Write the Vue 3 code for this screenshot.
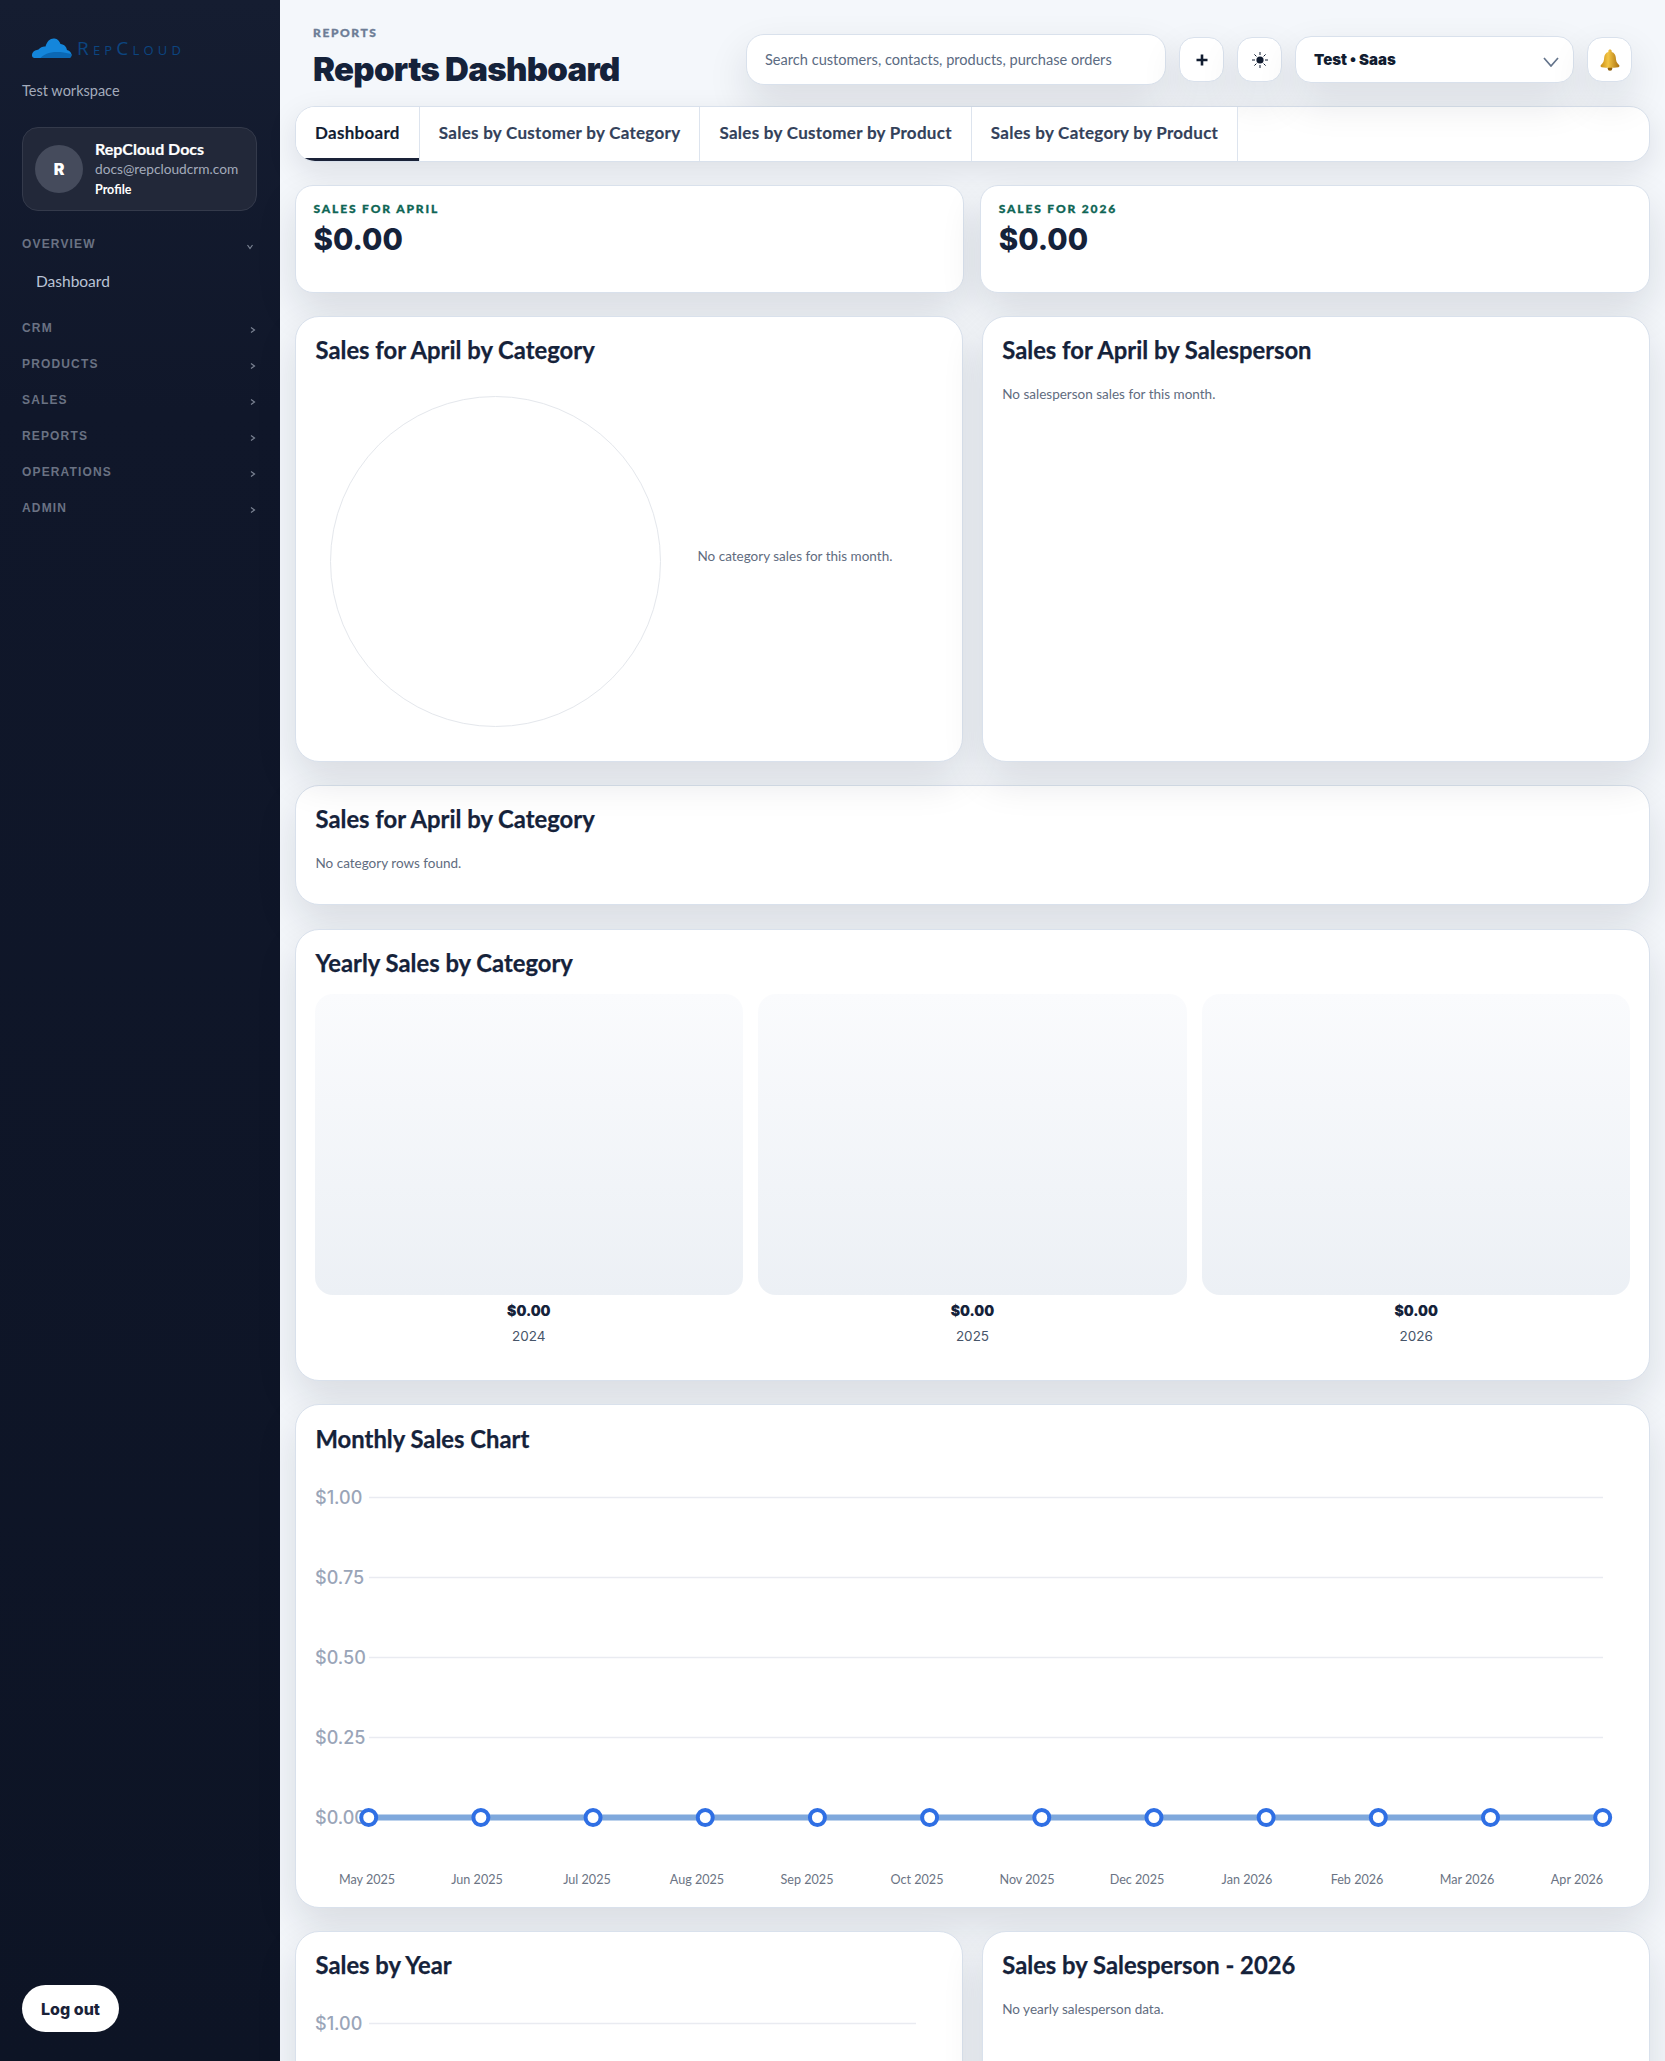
<template>
  <div class="shell">
    <aside class="sidebar">
      <div class="brand">
        <svg class="cloud" viewBox="0 0 40 20" aria-hidden="true">
          <path fill="#1486db" d="M3 20C.5 20 0 17 1 15c1-2.500 4-3 6-3.500C9 9 12 8 14 8.500 15.500 3 19 0 23 .5c3 0 5 2.500 6 5.500 4 .5 6 3 6.500 6 3 .5 4.500 3 4.500 5 0 2-1 3-3 3z"/>
          <path fill="#0b68b4" d="M9 20c4-5 14-8.500 31-4 .3 2-.8 4-3 4z"/>
        </svg>
        <span class="wordmark">RepCloud</span>
      </div>
      <p class="workspace">Test workspace</p>

      <div class="profile-card">
        <div class="avatar">R</div>
        <div class="profile-text">
          <div class="profile-name">RepCloud Docs</div>
          <div class="profile-mail">docs@repcloudcrm.com</div>
          <div class="profile-link">Profile</div>
        </div>
      </div>

      <nav class="nav">
        <div v-for="group in navGroups" :key="group.label" class="nav-group">
          <div class="nav-head">
            <span>{{ group.label }}</span>
            <svg class="nav-caret" :class="{ open: group.items }" viewBox="0 0 8 8" aria-hidden="true">
              <path d="M2 1.500 5.500 4 2 6.500" fill="none" stroke="currentColor" stroke-width="1.200"/>
            </svg>
          </div>
          <a v-for="item in group.items" :key="item" class="nav-item">{{ item }}</a>
        </div>
      </nav>

      <button type="button" class="logout">Log out</button>
    </aside>

    <main class="main">
      <header class="header">
        <div class="heading">
          <div class="eyebrow">REPORTS</div>
          <h1 class="page-title">Reports Dashboard</h1>
        </div>
        <div class="toolbar">
          <div class="search">Search customers, contacts, products, purchase orders</div>
          <button type="button" class="icon-btn" aria-label="Add">
            <svg viewBox="0 0 14 14" width="14" height="14"><path d="M7 1.500v11M1.500 7h11" stroke="#111c30" stroke-width="2.600"/></svg>
          </button>
          <button type="button" class="icon-btn" aria-label="Theme">
            <svg viewBox="0 0 18 18" width="18" height="18">
              <circle cx="9" cy="9" r="3.600" fill="#111c30"/>
              <path d="M9 1v3M9 14v3M1 9h3M14 9h3M3.400 3.400l2 2M12.600 12.600l2 2M3.400 14.600l2-2M12.600 5.400l2-2" stroke="#111c30" stroke-width="1"/>
            </svg>
          </button>
          <div class="company">
            <span>Test • Saas</span>
            <svg class="company-caret" viewBox="0 0 16 10" width="16" height="10"><path d="M1 1l7 8 7-8" fill="none" stroke="#64748b" stroke-width="1.700"/></svg>
          </div>
          <button type="button" class="icon-btn" aria-label="Notifications">
            <svg viewBox="0 0 22 22" width="22" height="22">
              <defs>
                <linearGradient id="bell" x1="0" y1="0" x2="1" y2="0">
                  <stop offset="0" stop-color="#c98d17"/>
                  <stop offset=".4" stop-color="#f3c544"/>
                  <stop offset="1" stop-color="#a96f0e"/>
                </linearGradient>
              </defs>
              <circle cx="11" cy="19.500" r="2.300" fill="#8f5f0c"/>
              <path fill="url(#bell)" d="M11 .5c1 0 1.700.7 1.700 1.700v.7c2.800.8 3.900 3 4.100 5.700.2 3.300.8 5.300 3.200 7.400.7.700.6 2-.6 2.200-5.300.7-11.500.7-16.800 0-1.200-.2-1.300-1.500-.6-2.200 2.400-2.100 3-4.100 3.200-7.400.2-2.700 1.300-4.900 4.100-5.700v-.7C9.300 1.200 10 .5 11 .5z"/>
            </svg>
          </button>
        </div>
      </header>

      <div class="tabs">
        <button
          v-for="tab in tabs"
          :key="tab"
          type="button"
          class="tab"
          :class="{ active: tab === 'Dashboard' }"
        >
          {{ tab }}
        </button>
      </div>

      <section class="metrics">
        <div v-for="metric in metrics" :key="metric" class="metric">
          <div class="metric-label">{{ metric }}</div>
          <div class="metric-value">$0.00</div>
        </div>
      </section>

      <section class="two-col">
        <div class="panel panel-tall">
          <h2 class="panel-title">Sales for April by Category</h2>
          <div class="pie-row">
            <div class="pie"></div>
            <p class="muted pie-note">No category sales for this month.</p>
          </div>
        </div>
        <div class="panel panel-tall">
          <h2 class="panel-title">Sales for April by Salesperson</h2>
          <p class="muted note">No salesperson sales for this month.</p>
        </div>
      </section>

      <section class="panel panel-rows">
        <h2 class="panel-title">Sales for April by Category</h2>
        <p class="muted note">No category rows found.</p>
      </section>

      <section class="panel panel-yearly">
        <h2 class="panel-title">Yearly Sales by Category</h2>
        <div class="year-grid">
          <div v-for="year in years" :key="year" class="year-col">
            <div class="year-tile"></div>
            <div class="year-value">$0.00</div>
            <div class="year-label">{{ year }}</div>
          </div>
        </div>
      </section>

      <section class="panel panel-monthly">
        <h2 class="panel-title">Monthly Sales Chart</h2>
        <svg class="chart" width="1315" height="418" viewBox="0 0 1315 418">
          <g v-for="tick in ticks" :key="tick.label">
            <line x1="54" x2="1288" :y1="tick.y" :y2="tick.y" class="grid-line" />
            <text x="0" :y="tick.y + 6.500" class="y-tick">{{ tick.label }}</text>
          </g>
          <line x1="53.700" x2="1287.700" y1="347.500" y2="347.500" class="series" />
          <circle v-for="p in points" :key="p.label" :cx="p.x" cy="347.500" r="7.500" class="dot" />
          <text
            v-for="p in points"
            :key="'label-' + p.label"
            :x="p.labelX"
            y="414"
            text-anchor="middle"
            class="x-tick"
          >
            {{ p.label }}
          </text>
        </svg>
      </section>

      <section class="two-col">
        <div class="panel panel-last">
          <h2 class="panel-title">Sales by Year</h2>
          <svg class="chart" width="628" height="60" viewBox="0 0 628 60">
            <line x1="54" x2="601" y1="27.500" y2="27.500" class="grid-line" />
            <text x="0" y="34" class="y-tick">$1.00</text>
          </svg>
        </div>
        <div class="panel panel-last">
          <h2 class="panel-title">Sales by Salesperson - 2026</h2>
          <p class="muted note">No yearly salesperson data.</p>
        </div>
      </section>
    </main>
  </div>
</template>

<script setup>
const navGroups = [
  { label: 'OVERVIEW', items: ['Dashboard'] },
  { label: 'CRM' },
  { label: 'PRODUCTS' },
  { label: 'SALES' },
  { label: 'REPORTS' },
  { label: 'OPERATIONS' },
  { label: 'ADMIN' }
]

const tabs = [
  'Dashboard',
  'Sales by Customer by Category',
  'Sales by Customer by Product',
  'Sales by Category by Product'
]

const metrics = ['SALES FOR APRIL', 'SALES FOR 2026']
const years = [2024, 2025, 2026]

const ticks = ['$1.00', '$0.75', '$0.50', '$0.25', '$0.00'].map((label, i) => ({
  label,
  y: 27.5 + i * 80
}))

const months = [
  'May 2025', 'Jun 2025', 'Jul 2025', 'Aug 2025', 'Sep 2025', 'Oct 2025',
  'Nov 2025', 'Dec 2025', 'Jan 2026', 'Feb 2026', 'Mar 2026', 'Apr 2026'
]

const points = months.map((label, i) => ({
  label,
  x: 53.7 + i * 112.18,
  labelX: 52 + i * 110
}))
</script>

<style>
html,
body {
  margin: 0;
  background: #f4f7fb;
}
</style>

<style scoped>
.shell {
  display: flex;
  width: 1665px;
  height: 2061px;
  overflow: hidden;
  font-family: Lato, "Open Sans", sans-serif;
  color: #15213a;
}

.sidebar {
  flex: none;
  display: flex;
  flex-direction: column;
  box-sizing: border-box;
  width: 280px;
  height: 100%;
  padding: 36px 23px 29px 22px;
  background: linear-gradient(180deg, #151d31 0%, #10172a 20%, #0d1425 100%);
}

.brand {
  display: flex;
  align-items: center;
  gap: 5px;
  height: 24px;
  padding-left: 9px;
}

.cloud {
  width: 41px;
  height: 20px;
}

.wordmark {
  font-family: "Open Sans", sans-serif;
  font-size: 19px;
  font-variant: small-caps;
  letter-spacing: 4.200px;
  color: #0c4580;
}

.workspace {
  margin: 21px 0 0;
  font-size: 14.500px;
  line-height: 20px;
  color: #a3abbb;
}

.profile-card {
  display: flex;
  align-items: center;
  gap: 12px;
  box-sizing: border-box;
  height: 84px;
  margin-top: 26px;
  padding: 0 12px;
  background: #222839;
  border: 1px solid #343a4b;
  border-radius: 16px;
}

.avatar {
  flex: none;
  display: flex;
  align-items: center;
  justify-content: center;
  width: 48px;
  height: 48px;
  border-radius: 50%;
  background: #454b5c;
  font-family: Inter, sans-serif;
  font-size: 16px;
  font-weight: 900;
  color: #fff;
}

.profile-name {
  font-size: 16px;
  font-weight: 700;
  line-height: 20px;
  color: #fff;
  -webkit-text-stroke: 0.200px #fff;
}

.profile-mail {
  font-size: 13.700px;
  line-height: 20px;
  color: #a3abbb;
}

.profile-link {
  margin-top: 1px;
  font-size: 12.500px;
  font-weight: 700;
  line-height: 20px;
  color: #fff;
}

.nav {
  margin-top: 15px;
}

.nav-head {
  display: flex;
  align-items: center;
  justify-content: space-between;
  height: 36px;
  font-family: "Liberation Sans", sans-serif;
  font-size: 12px;
  font-weight: 700;
  letter-spacing: 1.150px;
  color: #6a7283;
}

.nav-caret {
  width: 8px;
  height: 8px;
  margin-top: 3px;
  color: #7b8393;
}

.nav-caret.open {
  transform: rotate(90deg);
  margin-right: 3px;
  margin-top: 5px;
}

.nav-item {
  display: block;
  height: 38px;
  margin-bottom: 10px;
  padding-left: 14px;
  font-size: 15.500px;
  line-height: 38px;
  color: #bac4d6;
}

.logout {
  width: 97px;
  height: 47px;
  margin-top: auto;
  padding: 0;
  border: 0;
  border-radius: 24px;
  background: #fff;
  font-family: Inter, sans-serif;
  font-size: 16px;
  font-weight: 800;
  color: #1a2238;
}

.main {
  flex: 1;
  min-width: 0;
  padding: 0 15.500px 0 15px;
}

.header {
  display: flex;
  justify-content: space-between;
  box-sizing: border-box;
  height: 106px;
  padding: 26px 17.500px 0 18px;
}

.eyebrow {
  font-size: 12px;
  font-weight: 900;
  line-height: 14px;
  letter-spacing: 1.600px;
  color: #6d7d96;
  -webkit-text-stroke: 0.300px #6d7d96;
}

.page-title {
  margin: 9px 0 0;
  font-family: Inter, sans-serif;
  font-size: 33px;
  font-weight: 900;
  line-height: 40px;
  letter-spacing: -0.700px;
  color: #15223a;
}

.toolbar {
  display: flex;
  align-items: center;
  gap: 13px;
  height: 51px;
  margin-top: 8px;
}

.search,
.icon-btn,
.company,
.tabs,
.metric,
.panel {
  background: #fff;
  border: 1px solid #d9e1ec;
  box-shadow: 0 18px 40px rgba(15, 23, 42, 0.12);
}

.search {
  box-sizing: border-box;
  width: 420px;
  height: 51px;
  padding: 0 18px;
  border-radius: 18px;
  font-size: 14.600px;
  line-height: 49px;
  color: #5b6b82;
}

.icon-btn {
  display: flex;
  align-items: center;
  justify-content: center;
  box-sizing: border-box;
  width: 45px;
  height: 45px;
  padding: 0;
  border-radius: 15px;
}

.company {
  display: flex;
  align-items: center;
  justify-content: space-between;
  box-sizing: border-box;
  width: 279px;
  height: 47px;
  padding: 0 14px 0 18px;
  border-radius: 16px;
  font-family: Inter, sans-serif;
  font-size: 15px;
  font-weight: 900;
  color: #111c30;
}

.company-caret {
  margin-top: 4px;
}

.tabs {
  display: flex;
  box-sizing: border-box;
  height: 56px;
  overflow: hidden;
  border-radius: 20px;
  box-shadow: 0 10px 30px rgba(15, 23, 42, 0.1);
}

.tab {
  position: relative;
  padding: 0 19px 3px;
  border: 0;
  border-right: 1px solid #dde4ee;
  background: #fff;
  font-family: inherit;
  font-size: 17px;
  font-weight: 700;
  letter-spacing: 0.280px;
  color: #33415a;
  -webkit-text-stroke: 0.150px #33415a;
}

.tab.active {
  color: #111c30;
  box-shadow: inset 0 -3px 0 #1a2238;
}

.metrics {
  display: grid;
  grid-template-columns: 1fr 1fr;
  gap: 16px;
  margin-top: 23px;
}

.metric {
  box-sizing: border-box;
  height: 108px;
  padding: 16px 17.500px;
  border-radius: 18px;
}

.metric-label {
  font-size: 12px;
  font-weight: 900;
  line-height: 14px;
  letter-spacing: 1.850px;
  color: #0f6655;
  -webkit-text-stroke: 0.300px #0f6655;
}

.metric-value {
  margin-top: 5px;
  font-family: Inter, sans-serif;
  font-size: 29.500px;
  font-weight: 800;
  line-height: 36px;
  color: #15223a;
}

.two-col {
  display: grid;
  grid-template-columns: 1fr 1fr;
  gap: 19px;
  margin-top: 23px;
}

.panel {
  box-sizing: border-box;
  padding: 18px 18px 18px 18.500px;
  border-radius: 24px;
}

.panel-tall {
  height: 446px;
}

.panel-rows {
  height: 120px;
  margin-top: 23px;
}

.panel-yearly {
  height: 452px;
  margin-top: 24px;
}

.panel-monthly {
  height: 504px;
  margin-top: 23px;
  padding-top: 19px;
}

.panel-last {
  height: 300px;
}

.panel-title {
  margin: 0 0 1px;
  padding-left: 1px;
  font-size: 23.800px;
  font-weight: 700;
  line-height: 30px;
  color: #15223a;
  -webkit-text-stroke: 0.250px #15223a;
}

.muted {
  font-size: 13.500px;
  line-height: 20px;
  color: #5f6c80;
}

.note {
  margin: 19px 0 0;
  padding-left: 1px;
}

.pie-row {
  display: flex;
  align-items: center;
  gap: 37px;
  margin-top: 31px;
  padding-left: 15px;
}

.pie {
  flex: none;
  box-sizing: border-box;
  width: 331px;
  height: 331px;
  border: 1px solid #e4e7ec;
  border-radius: 50%;
}

.pie-note {
  margin: -12px 0 0;
}

.year-grid {
  display: grid;
  grid-template-columns: repeat(3, 1fr);
  gap: 15px;
  margin-top: 16px;
}

.year-col {
  text-align: center;
}

.year-tile {
  height: 301px;
  border-radius: 18px;
  background: linear-gradient(180deg, #fafbfd 0%, #ecf0f5 100%);
}

.year-value {
  margin-top: 6px;
  font-family: Inter, sans-serif;
  font-size: 14px;
  font-weight: 900;
  line-height: 20px;
  color: #15223a;
}

.year-label {
  margin-top: 5px;
  font-family: Inter, sans-serif;
  font-size: 13.500px;
  line-height: 20px;
  color: #475569;
}

.chart {
  display: block;
  margin-top: 16px;
}

.grid-line {
  stroke: #e9ebf1;
  stroke-width: 1.500;
}

.y-tick {
  font-family: Inter, sans-serif;
  font-size: 18px;
  font-weight: 500;
  fill: #9aa5b8;
}

.x-tick {
  font-size: 12.600px;
  fill: #6b7484;
}

.series {
  stroke: #7fa8dc;
  stroke-width: 6;
}

.dot {
  fill: #fff;
  stroke: #2f6fe4;
  stroke-width: 4;
}
</style>
